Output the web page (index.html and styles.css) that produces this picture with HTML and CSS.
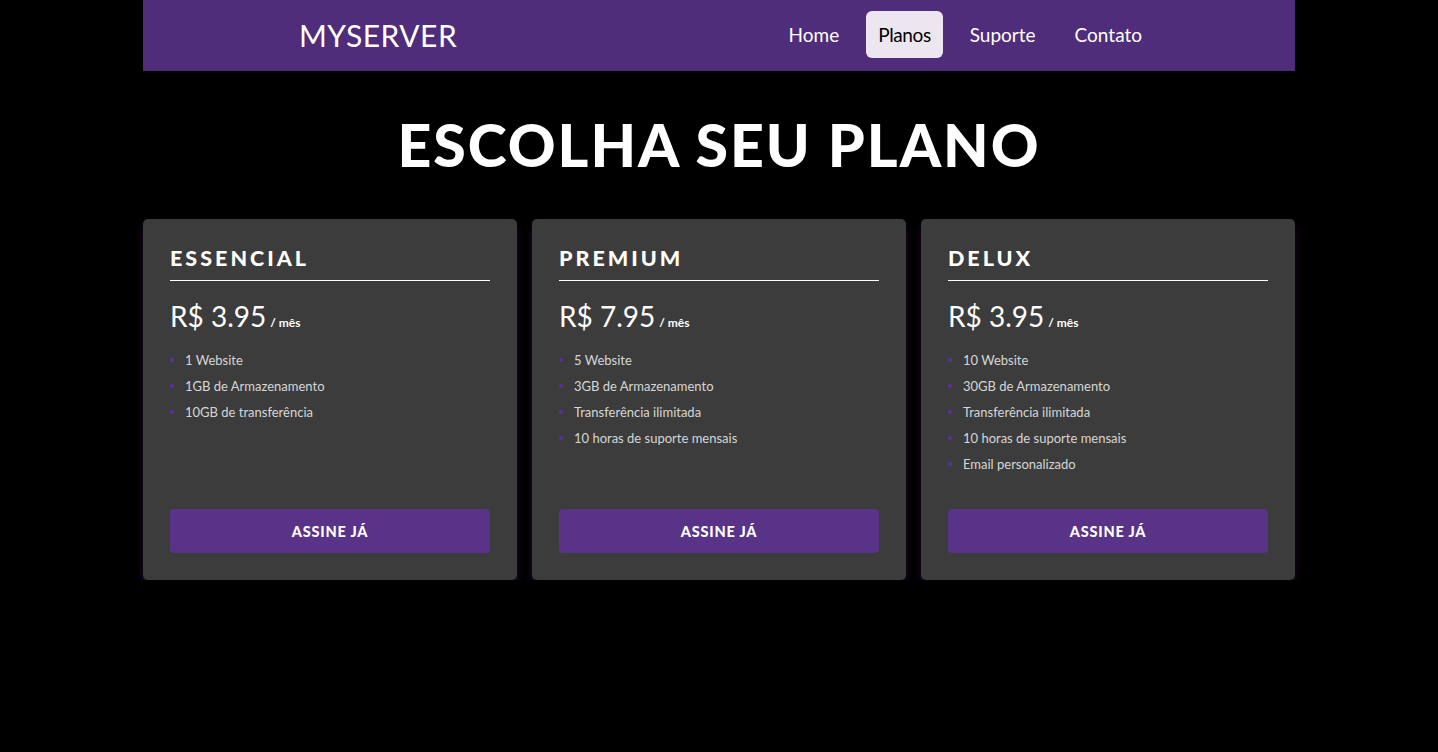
FILE: index.html
```html
<!DOCTYPE html>
<html lang="pt-BR">
<head>
<meta charset="utf-8">
<title>MyServer - Planos</title>
<link rel="stylesheet" href="styles.css">
</head>
<body>
<div class="page">
  <header class="header">
    <div class="logo">MYSERVER</div>
    <nav class="nav">
      <a class="nav-item" href="#">Home</a>
      <a class="nav-item active" href="#">Planos</a>
      <a class="nav-item" href="#">Suporte</a>
      <a class="nav-item" href="#">Contato</a>
    </nav>
  </header>
  <h1 class="title">ESCOLHA SEU PLANO</h1>
  <section class="plans">
    <div class="card">
      <h2 class="card-title">ESSENCIAL</h2>
      <div class="price"><span class="amount">R$ 3.95</span><span class="per">/ mês</span></div>
      <ul class="features">
        <li>1 Website</li>
        <li>1GB de Armazenamento</li>
        <li>10GB de transferência</li>
      </ul>
      <button class="btn">ASSINE JÁ</button>
    </div>
    <div class="card">
      <h2 class="card-title">PREMIUM</h2>
      <div class="price"><span class="amount">R$ 7.95</span><span class="per">/ mês</span></div>
      <ul class="features">
        <li>5 Website</li>
        <li>3GB de Armazenamento</li>
        <li>Transferência ilimitada</li>
        <li>10 horas de suporte mensais</li>
      </ul>
      <button class="btn">ASSINE JÁ</button>
    </div>
    <div class="card">
      <h2 class="card-title">DELUX</h2>
      <div class="price"><span class="amount">R$ 3.95</span><span class="per">/ mês</span></div>
      <ul class="features">
        <li>10 Website</li>
        <li>30GB de Armazenamento</li>
        <li>Transferência ilimitada</li>
        <li>10 horas de suporte mensais</li>
        <li>Email personalizado</li>
      </ul>
      <button class="btn">ASSINE JÁ</button>
    </div>
  </section>
</div>
</body>
</html>
```

FILE: styles.css
```css
* { box-sizing: border-box; }
html, body { margin: 0; padding: 0; background: #000; }
body { font-family: "Lato", "Open Sans", sans-serif; color: #fff; }
.page { width: 1152px; margin: 0 auto; }
.header {
  height: 71px;
  background: #4f2d7a;
  display: flex;
  align-items: center;
  justify-content: space-between;
  padding: 0 141px 0 156px;
}
.logo { font-size: 30px; letter-spacing: 0.5px; color: #fff; font-weight: 400; margin-top: -1px; }
.nav { display: flex; gap: 15px; align-items: center; margin-top: -2px; }
.nav-item {
  color: #fff;
  text-decoration: none;
  font-size: 19px;
  padding: 0 12px;
  height: 47px;
  line-height: 47px;
  border-radius: 6px;
}
.nav-item.active { background: #ece6f1; color: #000; letter-spacing: -0.4px; }
.title {
  margin: 0;
  padding: 44px 0 45px;
  text-align: center;
  font-size: 59px;
  line-height: 59px;
  font-weight: 900;
  letter-spacing: 2px;
}
.plans { display: flex; gap: 15px; }
.card {
  flex: 1;
  height: 361px;
  background: #3c3c3c;
  border-radius: 5px;
  padding: 27px;
  display: flex;
  flex-direction: column;
  box-shadow: 0 6px 10px -2px rgba(70, 25, 100, 0.7);
}
.card-title {
  margin: 0;
  font-size: 21.5px;
  font-weight: 900;
  letter-spacing: 3px;
  line-height: 24px;
  padding-bottom: 10px;
  border-bottom: 1px solid #fff;
}
.price { margin-top: 18px; display: flex; align-items: baseline; }
.amount { font-size: 28px; line-height: 34px; }
.per { font-size: 12px; margin-left: 4px; font-weight: 700; }
.features { list-style: none; margin: 14px 0 0; padding: 0; }
.features li {
  position: relative;
  font-size: 13px;
  line-height: 26px;
  color: #d6d6d6;
  padding-left: 15px;
}
.features li::before {
  content: "";
  position: absolute;
  left: 0;
  top: 11px;
  width: 4px;
  height: 4px;
  border-radius: 50%;
  background: #5a2fa0;
}
.btn {
  margin-top: auto;
  height: 44px;
  border: 0;
  border-radius: 4px;
  background: #583387;
  color: #fff;
  font-family: "Lato", sans-serif;
  font-weight: 900;
  font-size: 14.5px;
  letter-spacing: 0.8px;
}
```
